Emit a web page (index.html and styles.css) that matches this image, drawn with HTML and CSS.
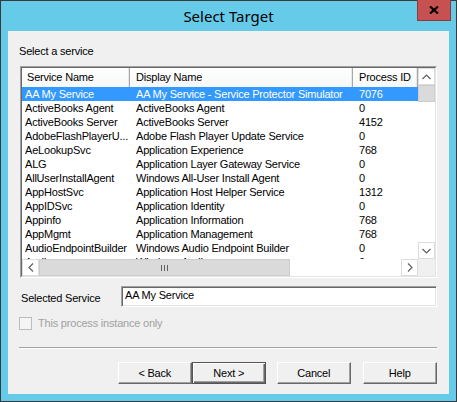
FILE: index.html
```html
<!DOCTYPE html>
<html>
<head>
<meta charset="utf-8">
<title>Select Target</title>
<link rel="stylesheet" href="styles.css">
</head>
<body>
<div class="window">
  <div class="titlebar">
    <div></div>
    <div class="title">Select Target</div>
    <div class="close-area">
      <div class="close">
        <svg width="10" height="8" viewBox="0 0 10 8"><path d="M1 0.5 L9 7.5 M9 0.5 L1 7.5" stroke="#000" stroke-width="2.2" fill="none"/></svg>
      </div>
    </div>
  </div>
  <div class="client">
    <div class="caption">Select a service</div>
    <div class="listview">
      <div class="lv-inner">
        <div class="lv-main">
          <div class="lv-header">
            <div class="hcell c1">Service Name</div>
            <div class="hcell c2">Display Name</div>
            <div class="hcell c3">Process ID</div>
          </div>
          <div class="lv-rows">
            <div class="row sel"><div class="cell c1">AA My Service</div><div class="cell c2">AA My Service - Service Protector Simulator</div><div class="cell c3">7076</div></div>
            <div class="row"><div class="cell c1">ActiveBooks Agent</div><div class="cell c2">ActiveBooks Agent</div><div class="cell c3">0</div></div>
            <div class="row"><div class="cell c1">ActiveBooks Server</div><div class="cell c2">ActiveBooks Server</div><div class="cell c3">4152</div></div>
            <div class="row"><div class="cell c1">AdobeFlashPlayerU...</div><div class="cell c2">Adobe Flash Player Update Service</div><div class="cell c3">0</div></div>
            <div class="row"><div class="cell c1">AeLookupSvc</div><div class="cell c2">Application Experience</div><div class="cell c3">768</div></div>
            <div class="row"><div class="cell c1">ALG</div><div class="cell c2">Application Layer Gateway Service</div><div class="cell c3">0</div></div>
            <div class="row"><div class="cell c1">AllUserInstallAgent</div><div class="cell c2">Windows All-User Install Agent</div><div class="cell c3">0</div></div>
            <div class="row"><div class="cell c1">AppHostSvc</div><div class="cell c2">Application Host Helper Service</div><div class="cell c3">1312</div></div>
            <div class="row"><div class="cell c1">AppIDSvc</div><div class="cell c2">Application Identity</div><div class="cell c3">0</div></div>
            <div class="row"><div class="cell c1">Appinfo</div><div class="cell c2">Application Information</div><div class="cell c3">768</div></div>
            <div class="row"><div class="cell c1">AppMgmt</div><div class="cell c2">Application Management</div><div class="cell c3">768</div></div>
            <div class="row"><div class="cell c1">AudioEndpointBuilder</div><div class="cell c2">Windows Audio Endpoint Builder</div><div class="cell c3">0</div></div>
            <div class="row"><div class="cell c1">Audiosrv</div><div class="cell c2">Windows Audio</div><div class="cell c3">0</div></div>
          </div>
        </div>
        <div class="vscroll">
          <div class="sb-btn">
            <svg width="9" height="6" viewBox="0 0 9 6"><path d="M0.5 5 L4.5 1 L8.5 5" stroke="#606060" stroke-width="1.2" fill="none"/></svg>
          </div>
          <div class="vthumb"></div>
          <div class="sb-track"></div>
          <div class="sb-btn">
            <svg width="9" height="6" viewBox="0 0 9 6"><path d="M0.5 1 L4.5 5 L8.5 1" stroke="#606060" stroke-width="1.2" fill="none"/></svg>
          </div>
        </div>
        <div class="hscroll">
          <div class="sb-btn">
            <svg width="6" height="9" viewBox="0 0 6 9"><path d="M5 0.5 L1 4.5 L5 8.5" stroke="#606060" stroke-width="1.2" fill="none"/></svg>
          </div>
          <div class="hthumb">
            <svg width="7" height="6" viewBox="0 0 7 6"><path d="M0.5 0 V6 M3.5 0 V6 M6.5 0 V6" stroke="#606060" stroke-width="1" fill="none"/></svg>
          </div>
          <div class="sb-track"></div>
          <div class="sb-btn">
            <svg width="6" height="9" viewBox="0 0 6 9"><path d="M1 0.5 L5 4.5 L1 8.5" stroke="#606060" stroke-width="1.2" fill="none"/></svg>
          </div>
        </div>
        <div class="corner"></div>
      </div>
    </div>
    <div class="field-row">
      <div class="field-label">Selected Service</div>
      <div class="textbox">AA My Service</div>
    </div>
    <div class="check-row">
      <span class="checkbox"></span>
      <span class="check-label">This process instance only</span>
    </div>
    <div class="separator"></div>
    <div class="buttons">
      <div class="btn w74">&lt; Back</div>
      <div class="btn default w75">Next &gt;</div>
      <div class="btn w74 gap-cancel">Cancel</div>
      <div class="btn w75 gap-help">Help</div>
    </div>
  </div>
</div>
</body>
</html>
```
FILE: styles.css
```css
* { box-sizing: border-box; }
html, body { margin: 0; padding: 0; }
body {
  width: 457px;
  height: 402px;
  overflow: hidden;
  font-family: "Liberation Sans", Arial, sans-serif;
  font-size: 11px;
  letter-spacing: -0.2px;
  color: #000;
  background: #fff;
}
.window {
  width: 457px;
  height: 402px;
  border: 1px solid #3a3a3a;
  background: #65cbe9;
  display: flex;
  flex-direction: column;
}
.titlebar {
  height: 30px;
  flex: none;
  display: grid;
  grid-template-columns: 1fr auto 1fr;
}
.title {
  font-family: "Noto Sans", "Liberation Sans", sans-serif;
  font-size: 15px;
  letter-spacing: 0;
  line-height: 30px;
  color: #000;
}
.close-area {
  justify-self: end;
  margin-right: 5px;
}
.close {
  width: 34px;
  height: 21px;
  margin-top: -1px;
  background: #c75050;
  border: 1px solid #8a3c3c;
  border-top: none;
  display: flex;
  align-items: center;
  justify-content: center;
}
.client {
  flex: 1;
  margin: 0 7px 7px;
  background: #f0f0f0;
  padding: 13px 12px 0 12px;
  display: flex;
  flex-direction: column;
}
.caption {
  line-height: 14px;
  margin-left: -1px;
}
.listview {
  margin-top: 8px;
  width: 417px;
  height: 212px;
  border: 1px solid;
  border-color: #a0a0a0 #fff #fff #a0a0a0;
}
.lv-inner {
  height: 100%;
  border: 1px solid;
  border-color: #696969 #e3e3e3 #e3e3e3 #696969;
  background: #fff;
  display: grid;
  grid-template-columns: 1fr 17px;
  grid-template-rows: 1fr 17px;
}
.lv-main {
  overflow: hidden;
  min-height: 0;
}
.lv-header {
  display: flex;
  height: 19px;
  background: linear-gradient(#fff, #f6f7f8);
}
.hcell {
  line-height: 18px;
  border-right: 1px solid #a8a8a8;
  box-shadow: inset -1px 0 #e8e8e8;
  white-space: nowrap;
  overflow: hidden;
  padding-left: 6px;
}
.hcell.c1 { padding-left: 5px; }
.c1 { width: 108px; flex: none; }
.c2 { width: 223px; flex: none; }
.c3 { width: 65px; flex: none; }
.row {
  display: flex;
  height: 14px;
  line-height: 14px;
  white-space: nowrap;
}
.row.sel {
  background: #3399ff;
  color: #fff;
}
.cell {
  overflow: hidden;
  padding-left: 6px;
}
.cell.c1 { padding-left: 3px; }
.vscroll {
  display: flex;
  flex-direction: column;
  background: #fff;
  min-height: 0;
}
.hscroll {
  display: flex;
  background: #fff;
}
.sb-btn {
  width: 17px;
  height: 17px;
  flex: none;
  border: 1px solid #dcdcdc;
  background: #fff;
  display: flex;
  align-items: center;
  justify-content: center;
}
.sb-track {
  flex: 1;
  background: #fff;
}
.vthumb {
  height: 17px;
  flex: none;
  background: #dadada;
  border: 1px solid #cdcdcd;
}
.hthumb {
  width: 251px;
  flex: none;
  background: #dadada;
  border: 1px solid #cdcdcd;
  display: flex;
  align-items: center;
  justify-content: center;
}
.corner {
  background: #f0f0f0;
}
.field-row {
  margin-top: 8px;
  display: flex;
  align-items: center;
}
.field-label {
  width: 101px;
  padding-left: 1px;
  padding-top: 2px;
  line-height: 14px;
}
.textbox {
  width: 316px;
  height: 21px;
  border: 1px solid;
  border-color: #a0a0a0 #fff #fff #a0a0a0;
  box-shadow: inset 1px 1px #696969, inset -1px -1px #e3e3e3;
  background: #fff;
  padding-left: 3px;
  line-height: 17px;
}
.check-row {
  margin-top: 10px;
  display: flex;
  align-items: center;
  height: 13px;
}
.checkbox {
  width: 13px;
  height: 13px;
  margin-left: -1px;
  border: 1px solid #bcbcbc;
  background: #f4f4f4;
}
.check-label {
  margin-left: 6px;
  color: #a0a0a0;
  line-height: 13px;
}
.separator {
  margin-top: 17px;
  margin-left: -1px;
  width: 418px;
  height: 2px;
  border-top: 1px solid #a0a0a0;
  border-bottom: 1px solid #fff;
}
.buttons {
  margin-top: 13px;
  margin-left: 98px;
  display: flex;
}
.btn {
  height: 22px;
  line-height: 20px;
  text-align: center;
  background: #f0f0f0;
  border: 1px solid;
  border-color: #fff #696969 #696969 #fff;
  box-shadow: inset -1px -1px #a0a0a0;
}
.btn.default {
  border-color: #555;
  box-shadow: inset 1px 1px #fff, inset -1px -1px #696969, inset -2px -2px #a0a0a0;
}
.w74 { width: 74px; }
.w75 { width: 75px; }
.gap-cancel { margin-left: 11px; }
.gap-help { margin-left: 12px; }
```
